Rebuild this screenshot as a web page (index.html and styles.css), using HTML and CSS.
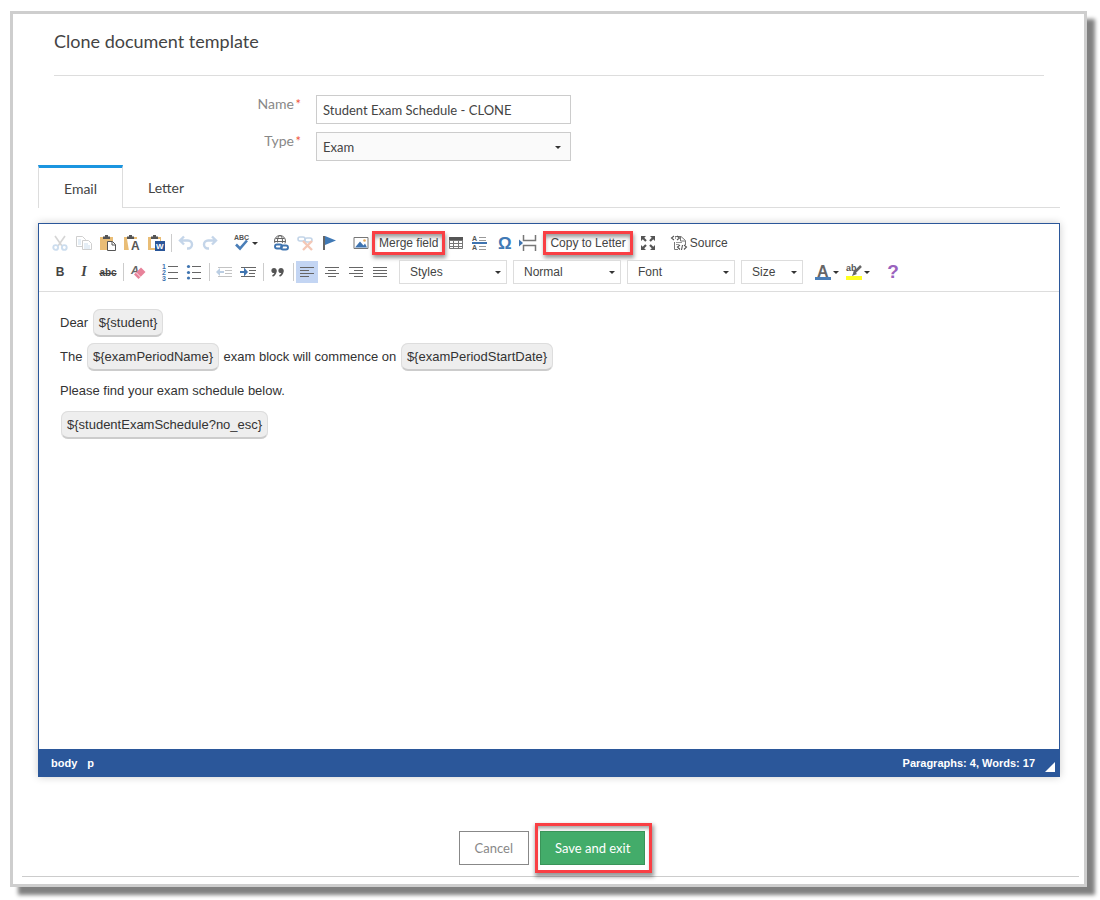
FILE: index.html
```html
<!DOCTYPE html>
<html lang="en">
<head>
  <meta charset="utf-8">
  <title>Clone document template</title>
  <link rel="stylesheet" href="styles.css">
</head>
<body>
  <div class="window">
    <h1>Clone document template</h1>

    <form class="fields">
      <label for="name">Name <span class="required">*</span></label>
      <input type="text" id="name" value="Student Exam Schedule - CLONE">
      <label for="type">Type <span class="required">*</span></label>
      <div class="select">
        <select id="type"><option>Exam</option></select>
      </div>
    </form>

    <div class="tabs">
      <a href="#email" class="tab active">Email</a>
      <a href="#letter" class="tab">Letter</a>
    </div>

    <div class="editor" id="email">
      <div class="toolbar">
        <div class="row">
          <div class="group">
            <button class="tool off" aria-label="Cut"><svg viewBox="0 0 16 16"><path d="M3 1l7 10M13 1L6 11" fill="none" stroke="#888" stroke-width="1.6"/><g fill="none" stroke="#6f9fd0" stroke-width="1.9"><circle cx="3.700" cy="12.500" r="2.400"/><circle cx="12.300" cy="12.500" r="2.400"/></g></svg></button>
            <button class="tool off" aria-label="Copy"><svg viewBox="0 0 16 16"><g fill="#fff" stroke="#777"><path d="M.5 1.500h6l3 3v7h-9z"/><path d="M6.500 5.500h6l3 3v6h-9z"/></g><path d="M2 5h3M2 7h3M2 9h3M8 9h4M8 11h6M8 13h6" stroke="#6f9fd0"/></svg></button>
            <button class="tool" aria-label="Paste"><svg viewBox="0 0 16 16"><path d="M0 2h13v13H0z" fill="#e9bd76"/><path d="M3 1.500h2V0h3v1.500h2V4H3z" fill="#555"/><path d="M7.500 6.500h5l3 3v6h-8z" fill="#fff" stroke="#555"/><path d="M12 6.500V10h3.500" fill="none" stroke="#555"/></svg></button>
            <button class="tool" aria-label="Paste as plain text"><svg viewBox="0 0 16 16"><path d="M0 2h13v13H0z" fill="#e9bd76"/><path d="M3 4h12v12H5z" fill="#fff"/><path d="M3 1.500h2V0h3v1.500h2V4H3z" fill="#555"/><text x="7" y="15" font-size="12" font-weight="bold" fill="#555">A</text></svg></button>
            <button class="tool" aria-label="Paste from Word"><svg viewBox="0 0 16 16"><path d="M0 2h13v13H0z" fill="#e9bd76"/><path d="M3 4h9v9H3z" fill="#fff"/><path d="M3 1.500h2V0h3v1.500h2V4H3z" fill="#555"/><path d="M7 6h10v10H7z" fill="#2a5699"/><text x="8" y="14" font-size="8" font-weight="bold" fill="#fff">W</text></svg></button>
          </div>
          <span class="sep"></span>
          <div class="group">
            <button class="tool off" aria-label="Undo"><svg viewBox="0 0 16 16"><path d="M6 1.500L2 5.500l4 4M2.500 5.500H10a4 4 0 0 1 0 8H9" fill="none" stroke="#5587bf" stroke-width="2.400"/></svg></button>
            <button class="tool off" aria-label="Redo"><svg viewBox="0 0 16 16"><path d="M10 1.500l4 4-4 4M13.500 5.500H6a4 4 0 0 0 0 8h1" fill="none" stroke="#5587bf" stroke-width="2.400"/></svg></button>
          </div>
          <div class="group">
            <button class="tool drop" aria-label="Spell check"><svg viewBox="0 0 16 16"><text x="0" y="5" font-size="7" font-weight="bold" fill="#555">ABC</text><path d="M2 9.500l4 4 7-8" fill="none" stroke="#4a7eb8" stroke-width="2.600"/></svg></button>
          </div>
          <div class="group">
            <button class="tool" aria-label="Link"><svg viewBox="0 0 16 16"><g fill="none" stroke="#666"><circle cx="7" cy="6" r="5.500"/><ellipse cx="7" cy="6" rx="2.500" ry="5.500"/><path d="M1.500 6.500h11M2.500 3.500h9"/></g><g fill="#fff" stroke="#fff" stroke-width="4"><rect x="2" y="9.500" width="7" height="4" rx="2"/><rect x="8" y="10.500" width="7" height="4" rx="2"/></g><g fill="none" stroke="#3f74b0" stroke-width="1.900"><rect x="2" y="9.500" width="7" height="4" rx="2"/><rect x="8" y="10.500" width="7" height="4" rx="2"/></g></svg></button>
            <button class="tool off" aria-label="Unlink"><svg viewBox="0 0 16 16"><g fill="none" stroke="#5587bf" stroke-width="1.600"><rect x="1" y="2" width="7" height="4" rx="2"/><rect x="8" y="3" width="7" height="4" rx="2"/></g><path d="M6 6l9 9M15 6l-9 9" stroke="#e2622f" stroke-width="2.400"/></svg></button>
            <button class="tool" aria-label="Anchor"><svg viewBox="0 0 16 16"><path d="M2 1h2v14H2z" fill="#666"/><path d="M4 1l11 4.500L4 10z" fill="#4079b5"/></svg></button>
          </div>
          <div class="group">
            <button class="tool" aria-label="Image"><svg viewBox="0 0 16 16"><path d="M1 2.500h14v11H1z" fill="#fff" stroke="#777"/><path d="M2 12.500l5-6 3.500 4 1.500-2 2 4z" fill="#3f74b0"/><circle cx="11.500" cy="5.500" r="1.300" fill="#e6a858"/></svg></button>
            <button class="tool text marked">Merge field</button>
            <button class="tool" aria-label="Table"><svg viewBox="0 0 16 16"><path d="M1.500 2.500h13v11h-13zM1.500 8.500h13M1.500 11.500h13M5.500 5v9M10.500 5v9M1.500 5.500h13" fill="none" stroke="#777"/><path d="M1 2h14v3H1z" fill="#555"/></svg></button>
            <button class="tool" aria-label="Horizontal line"><svg viewBox="0 0 16 16"><path d="M0 7h15v2H0z" fill="#3f74b0"/><path d="M7 2.500h7M7 5.500h7M7 11.500h7M7 14.500h7" stroke="#999"/><text x="0" y="6" font-size="7" font-weight="bold" fill="#555">A</text><text x="0" y="15" font-size="7" font-weight="bold" fill="#555">A</text></svg></button>
            <button class="tool" aria-label="Special character"><svg viewBox="0 0 16 16"><text x="2" y="14" font-size="17" font-weight="bold" fill="#4079b5">Ω</text></svg></button>
            <button class="tool" aria-label="Page break"><svg class="wide" viewBox="0 0 18 16"><path d="M4.500 0v5.500h12V0M4.500 16v-5.500h12V16" fill="none" stroke="#777" stroke-width="1.500"/><path d="M0 4.500L4 8l-4 3.500z" fill="#3f74b0"/></svg></button>
          </div>
          <button class="tool text marked copy">Copy to Letter</button>
          <button class="tool" aria-label="Maximize"><svg viewBox="0 0 16 16"><g fill="#555"><path d="M1 1h5L1 6zM15 1v5l-5-5zM1 15v-5l5 5zM15 15h-5l5-5z"/></g><path d="M2 2l4 4M14 2l-4 4M2 14l4-4M14 14l-4-4" stroke="#555" stroke-width="2.200"/></svg></button>
          <div class="group">
            <button class="tool source"><svg viewBox="0 0 16 16"><path d="M4 1.500h6l4.500 4V10M3.500 7v7.500H7" fill="none" stroke="#777"/><path d="M9.500 2v4H14" fill="none" stroke="#777"/><g fill="none" stroke="#555" stroke-width="1.100"><path d="M3 1L.5 3 3 5M6 1l2.500 2L6 5M4 3h1"/><path d="M9 10l-2.500 2L9 14.500M13 10l2.500 2-2.500 2.500M11.500 10l-1 5"/></g><path d="M5 7.500h6M5 9.500h3" stroke="#999"/></svg>Source</button>
          </div>
        </div>

        <div class="row">
          <div class="group">
            <button class="tool letter">B</button>
            <button class="tool letter italic">I</button>
            <button class="tool letter strike">abc</button>
          </div>
          <span class="sep"></span>
          <div class="group">
            <button class="tool" aria-label="Remove format"><svg viewBox="0 0 16 16"><text x="1" y="10" font-size="11" font-style="italic" font-weight="bold" fill="#666">A</text><path d="M11 3.500L15.500 8 8.500 15 4 10.500z" fill="#e8829a"/><path d="M6 8.500l4.500 4.500" stroke="#fff" stroke-width=".8"/></svg></button>
          </div>
          <div class="group">
            <button class="tool" aria-label="Numbered list"><svg viewBox="0 0 16 16"><path d="M6 2.500h10M6 8.500h10M6 14.500h10" stroke="#666"/><g font-size="7" font-weight="bold" fill="#3f74b0"><text x="0" y="5">1</text><text x="0" y="11">2</text><text x="0" y="17">3</text></g></svg></button>
            <button class="tool" aria-label="Bulleted list"><svg viewBox="0 0 16 16"><path d="M6 2.500h9M6 8.500h9M6 14.500h9" stroke="#666"/><g fill="#3f74b0"><circle cx="2.500" cy="2.500" r="1.600"/><circle cx="2.500" cy="8.500" r="1.600"/><circle cx="2.500" cy="14" r="1.600"/></g></svg></button>
          </div>
          <span class="sep"></span>
          <div class="group">
            <button class="tool off" aria-label="Decrease indent"><svg viewBox="0 0 16 16"><path d="M2 3.500h14M9 6.500h7M9 9.500h7M2 12.500h14" stroke="#555"/><path d="M0 8l4-4v3h4v2H4v3z" fill="#3f74b0"/></svg></button>
            <button class="tool" aria-label="Increase indent"><svg viewBox="0 0 16 16"><path d="M1 3.500h15M9 6.500h7M9 9.500h6M1 12.500h14" stroke="#666"/><path d="M8 8L4 3.500V7H0v2h4v3.500z" fill="#3f74b0"/></svg></button>
          </div>
          <span class="sep"></span>
          <div class="group">
            <button class="tool" aria-label="Block quote"><svg viewBox="0 0 16 16"><g fill="#555"><circle cx="4" cy="6.500" r="2.600"/><circle cx="11" cy="6.500" r="2.600"/></g><path d="M5.700 6.500q0 4-3.200 5.500M12.700 6.500q0 4-3.200 5.500" fill="none" stroke="#555" stroke-width="1.800"/></svg></button>
          </div>
          <span class="sep"></span>
          <div class="group">
            <button class="tool on" aria-label="Align left"><svg viewBox="0 0 16 16"><path d="M1 3.500h14M1 6.500h9M1 9.500h14M1 12.500h9" stroke="#666"/></svg></button>
            <button class="tool" aria-label="Align center"><svg viewBox="0 0 16 16"><path d="M1 3.500h14M4 6.500h8M1 9.500h14M4 12.500h8" stroke="#666"/></svg></button>
            <button class="tool" aria-label="Align right"><svg viewBox="0 0 16 16"><path d="M1 3.500h14M6 6.500h9M1 9.500h14M6 12.500h9" stroke="#666"/></svg></button>
            <button class="tool" aria-label="Justify"><svg viewBox="0 0 16 16"><path d="M1 3.500h14M1 6.500h14M1 9.500h14M1 12.500h14" stroke="#666"/></svg></button>
          </div>
          <div class="combos">
            <div class="select"><select aria-label="Styles"><option>Styles</option></select></div>
            <div class="select"><select aria-label="Paragraph format"><option>Normal</option></select></div>
            <div class="select"><select aria-label="Font"><option>Font</option></select></div>
            <div class="select size"><select aria-label="Size"><option>Size</option></select></div>
          </div>
          <div class="group">
            <button class="tool drop" aria-label="Text color"><svg viewBox="0 0 16 16"><text x="2" y="13" font-size="16" font-weight="bold" fill="#666">A</text><path d="M0 13h16v3H0z" fill="#4a7eb8"/></svg></button>
            <button class="tool drop" aria-label="Background color"><svg viewBox="0 0 16 16"><text x="0" y="7" font-size="9" font-weight="bold" fill="#555">ab</text><path d="M15 2L8 9" stroke="#666" stroke-width="2.500"/><path d="M8 7l3 3-5 2z" fill="#666"/><path d="M0 12h16v4H0z" fill="#ff2"/></svg></button>
          </div>
          <div class="group">
            <button class="tool letter help">?</button>
          </div>
        </div>
      </div>

      <div class="content" contenteditable="true" spellcheck="false">
        <p>Dear <span class="merge">${student}</span></p>
        <p>The <span class="merge">${examPeriodName}</span> exam block will commence on <span class="merge">${examPeriodStartDate}</span></p>
        <p>Please find your exam schedule below.</p>
        <p><span class="merge">${studentExamSchedule?no_esc}</span></p>
      </div>

      <div class="status">
        <a href="#body">body</a>
        <a href="#p">p</a>
        <span class="count">Paragraphs: 4, Words: 17</span>
        <span class="resizer"></span>
      </div>
    </div>

    <div class="actions">
      <button class="btn">Cancel</button>
      <div class="marked save">
        <button class="btn primary">Save and exit</button>
      </div>
    </div>
  </div>
</body>
</html>
```
FILE: styles.css
```css
* {
  box-sizing: border-box;
}
body {
  margin: 0;
  padding: 11px 13px 13px 10px;
  background: #fff;
  color: #444;
  font-family: Lato, sans-serif;
  font-size: 13px;
}
button, input, select {
  font: inherit;
  color: inherit;
  margin: 0;
}
a {
  color: inherit;
  text-decoration: none;
}
.window {
  padding: 0 5px 7px 9px;
  border: 3px solid #cecece;
  background: #fff;
  box-shadow: 8px 8px 4px 0 #808080;
}
h1 {
  margin: 0 35px 0 32px;
  padding: 15px 0 22px;
  border-bottom: 1px solid #ddd;
  font-size: 18px;
  line-height: 24px;
  font-weight: 400;
}

/* name and type */
.fields {
  display: grid;
  grid-template-columns: 279px 255px;
  column-gap: 15px;
  row-gap: 8px;
  padding-top: 19px;
}
.fields label {
  font-size: 14px;
  line-height: 18px;
  text-align: right;
  color: #888;
}
.required {
  color: #f0563d;
  font-size: 13px;
  margin-left: -2px;
}
.fields input, .fields select {
  width: 100%;
  height: 29px;
  padding: 0 6px;
  border: 1px solid #ccc;
  border-radius: 0;
}
.select {
  position: relative;
}
.select select {
  display: block;
  appearance: none;
  width: 100%;
}
.fields select {
  background: #fafafa;
}
.select::after, .drop::after {
  content: "";
  border: 3px solid transparent;
  border-top-color: #333;
  border-bottom: 0;
}
.select::after {
  position: absolute;
  right: 10px;
  top: 50%;
  margin-top: -1px;
  pointer-events: none;
}

/* tabs */
.tabs {
  display: flex;
  margin: 4px 19px 0 16px;
  border-bottom: 1px solid #ddd;
  font-size: 14px;
}
.tab {
  padding: 14px 25px 10px;
  line-height: 17px;
}
.tab.active {
  padding: 12px 25px 11px;
  margin-bottom: -1px;
  border: 1px solid #ddd;
  border-top: 3px solid #1b95e0;
  border-bottom: 0;
  background: #fff;
}

/* editor */
.editor {
  margin: 15px 19px 0 16px;
  border: 1px solid #2b579a;
  box-shadow: 0 0 8px rgba(0, 0, 0, 0.2);
  font-family: "Liberation Sans", Arial, sans-serif;
  font-size: 12px;
}
.toolbar {
  display: grid;
  row-gap: 5px;
  padding: 7px 9px;
  border-bottom: 1px solid #ddd;
}
.row {
  display: flex;
  align-items: center;
  height: 24px;
}
.group, .combos {
  display: flex;
  align-items: center;
}
.group + .group, .tool + .group, .combos + .group {
  margin-left: 8px;
}
.sep {
  width: 1px;
  height: 18px;
  margin: 0 2px 0 3px;
  background: #ccc;
}
.tool {
  display: flex;
  align-items: center;
  justify-content: center;
  width: 24px;
  height: 22px;
  padding: 0;
  border: 0;
  background: none;
  white-space: nowrap;
}
.tool svg {
  width: 16px;
  height: 16px;
  flex: none;
  overflow: visible;
}
.tool svg.wide {
  width: 18px;
}
.tool.off svg {
  opacity: 0.35;
}
.tool.on {
  width: 22px;
  margin-right: 2px;
  background: #c3d5f3;
}
.tool.drop {
  width: 31px;
  gap: 2px;
}
.tool.text {
  width: auto;
  padding: 0 6px;
}
.tool.source {
  width: auto;
  padding: 0 3px;
  gap: 3px;
}
.tool.copy {
  margin: 0 4px;
}
.marked {
  outline: 3px solid #f93f44;
  outline-offset: -2px;
  box-shadow: 1px 3px 4px 1px rgba(0, 0, 0, 0.4), inset 0 4px 4px 1px rgba(0, 0, 0, 0.4);
}
.letter {
  font-weight: 700;
}
.letter.italic {
  font-family: "Liberation Serif", serif;
  font-size: 14px;
  font-style: italic;
}
.letter.strike {
  font-size: 10px;
  text-decoration: line-through;
}
.letter.help {
  font-size: 19px;
  color: #9a62bd;
}
.combos {
  gap: 6px;
  margin-left: 7px;
}
.combos .select {
  width: 108px;
}
.combos .size {
  width: 62px;
}
.combos select {
  height: 24px;
  padding: 0 10px;
  border: 1px solid #ddd;
  border-radius: 0;
  background: #fff;
}
.combos .select::after {
  right: 6px;
}
.content {
  min-height: 457px;
  padding: 20px 21px;
  font-size: 13px;
  line-height: 21px;
  color: #333;
  outline: 0;
}
.content p {
  margin: 0 0 13px;
}
.merge {
  margin: 0 1px;
  padding: 5px;
  border: 1px solid #ddd;
  border-bottom: 2px solid #ccc;
  border-radius: 7px;
  background: #eee;
}
.status {
  display: flex;
  align-items: center;
  gap: 10px;
  height: 27px;
  padding: 0 4px 0 12px;
  background: #2b579a;
  color: #fff;
  font-size: 11px;
  font-weight: 700;
}
.count {
  margin-left: auto;
}
.resizer {
  align-self: flex-end;
  margin-bottom: 4px;
  border: 5px solid #fff;
  border-top-color: transparent;
  border-left-color: transparent;
}

/* buttons below the editor */
.actions {
  display: flex;
  justify-content: center;
  align-items: center;
  gap: 6px;
  margin-top: 46px;
  padding: 0 0 3px 10px;
  border-bottom: 1px solid #ccc;
}
.btn {
  height: 34px;
  padding: 0 15px;
  border: 1px solid #888;
  background: #fff;
  color: #888;
}
.btn.primary {
  padding: 0 14px;
  border-color: #3a9459;
  background: #43ac6a;
  color: #fff;
}
.save {
  padding: 8px 7px 8px 5px;
  outline-offset: -3px;
}
```
